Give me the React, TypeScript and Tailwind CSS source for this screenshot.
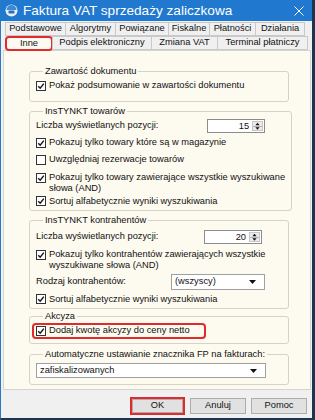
import { ReactNode } from 'react';

function Check({ checked = true }: { checked?: boolean }) {
  return (
    <span className="flex h-[10px] w-[10px] shrink-0 items-center justify-center border border-[#333] bg-white">
      {checked && (
        <svg width="8" height="8" viewBox="0 0 8 8">
          <path d="M1.2 4.2 L3.2 6.2 L6.8 1.6" stroke="#1a1a1a" strokeWidth="1.5" fill="none" />
        </svg>
      )}
    </span>
  );
}

function Spin({ value }: { value: string }) {
  return (
    <div className="flex h-[14px] w-[58px] border border-[#8c8c8c] bg-white">
      <span className="flex-1 pr-[3px] text-right leading-[12px]">{value}</span>
      <span className="my-[1px] mr-[1px] flex w-[11px] flex-col border border-[#c8c8c8] bg-[#eaeaea]">
        <svg className="flex-1" viewBox="0 0 9 5" width="9" height="5">
          <path d="M1.5 4.5 L4.5 1 L7.5 4.5 Z" fill="#111" />
        </svg>
        <span className="h-px bg-[#b5b5b5]" />
        <svg className="flex-1" viewBox="0 0 9 5" width="9" height="5">
          <path d="M1.5 0.5 L4.5 4 L7.5 0.5 Z" fill="#111" />
        </svg>
      </span>
    </div>
  );
}

function Select({ value, className }: { value: string; className: string }) {
  return (
    <div className={`flex items-center border border-[#a0a0a0] bg-white pl-[3px] pr-[8px] ${className}`}>
      <span className="flex-1">{value}</span>
      <svg width="7" height="4" viewBox="0 0 7 4">
        <path d="M0 0 L7 0 L3.5 4 Z" fill="#111" />
      </svg>
    </div>
  );
}

function Group({ title, className = '', children }: { title: string; className?: string; children: ReactNode }) {
  return (
    <fieldset className={`ml-[25px] w-[260px] rounded-[3px] border border-[#d6d2c6] px-[6px] ${className}`}>
      <legend className="ml-[7px] px-[2px] leading-[11px]">{title}</legend>
      {children}
    </fieldset>
  );
}

function Row({ label, className = '' }: { label: ReactNode; className?: string }) {
  return (
    <div className={`flex items-center gap-[3px] ${className}`}>
      <Check />
      <span className="whitespace-nowrap leading-[11px]">{label}</span>
    </div>
  );
}

const tabsTop = [
  ['Podstawowe', 'w-[61px]'],
  ['Algorytmy', 'w-[51px]'],
  ['Powiązane', 'w-[54px]'],
  ['Fiskalne', 'w-[42px]'],
  ['Płatności', 'w-[47px]'],
  ['Działania', 'w-[50px]'],
];

const tabsBottom = [
  ['Podpis elektroniczny', 'w-[100px]'],
  ['Zmiana VAT', 'w-[67px]'],
  ['Terminal płatniczy', 'w-[91px]'],
];

export default function App() {
  return (
    <div
      className="flex h-[420px] w-[315px] flex-col border-b-2 border-l border-r-[3px] border-b-[#1d3550] border-l-[#2a78c8] border-r-[#1d3550] bg-[#f0f0f0] text-[9.3px] text-[#111]"
      style={{ fontFamily: '"Liberation Sans", Arial, sans-serif' }}
    >
      {/* title bar */}
      <div className="flex h-[21px] shrink-0 items-center bg-[#2179cf] pl-[4px] pr-[8px] text-white">
        <svg width="13" height="13" viewBox="0 0 13 13">
          <circle cx="6.5" cy="6.5" r="6" fill="#e9f2fb" />
          <path d="M1.5 6 A5 5 0 0 1 11.5 6 Z" fill="#3a8ad6" />
          <rect x="3.5" y="6.5" width="6" height="3" rx="0.5" fill="#2b6fb8" />
        </svg>
        <span className="ml-[5px] flex-1 text-[13.6px] leading-[16px]">Faktura VAT sprzedaży zaliczkowa</span>
        <svg width="10" height="10" viewBox="0 0 10 10">
          <path d="M0.5 0.5 L9.5 9.5 M9.5 0.5 L0.5 9.5" stroke="#fff" strokeWidth="1" />
        </svg>
      </div>

      {/* tabs */}
      <div className="mt-[1px] flex h-[14px] pl-[4px]">
        {tabsTop.map(([t, w]) => (
          <div key={t} className={`${w} -mr-px flex items-center justify-center whitespace-nowrap border border-[#c9c9c9] bg-[#f0f0f0]`}>
            {t}
          </div>
        ))}
      </div>
      <div className="relative z-10 -mb-px flex h-[15px] pl-[4px]">
        <div className="flex w-[48px] items-center justify-center rounded-[4px] border-2 border-[#e02a2e] bg-[#fdfaf2]">
          Inne
        </div>
        {tabsBottom.map(([t, w]) => (
          <div key={t} className={`${w} -ml-px flex h-[14px] items-center justify-center whitespace-nowrap border border-[#c9c9c9] bg-[#f0f0f0]`}>
            {t}
          </div>
        ))}
      </div>

      {/* content panel */}
      <div className="ml-[2px] mr-[1px] flex h-[340px] flex-col border border-[#d4d4d4] bg-[#fdfaf0] pt-[15px]">
        <Group title="Zawartość dokumentu" className="pb-[9px]">
          <Row className="mt-[2px] h-[13px]" label="Pokaż podsumowanie w zawartości dokumentu" />
        </Group>

        <Group title="InsTYNKT towarów" className="mt-[4px] pb-[2px]">
          <div className="mt-[2px] flex h-[14px] items-center justify-between pr-[20px]">
            <span>Liczba wyświetlanych pozycji:</span>
            <Spin value="15" />
          </div>
          <Row className="mt-[1px] h-[17px]" label="Pokazuj tylko towary które są w magazynie" />
          <div className="flex h-[17px] items-center gap-[3px]">
            <Check checked={false} />
            <span>Uwzględniaj rezerwacje towarów</span>
          </div>
          <div className="mt-[4px] flex items-start gap-[3px]">
            <span className="mt-[0.5px]">
              <Check />
            </span>
            <span className="whitespace-nowrap leading-[11px]">
              Pokazuj tylko towary zawierające wszystkie wyszukiwane
              <br />
              słowa (AND)
            </span>
          </div>
          <Row className="h-[14px]" label="Sortuj alfabetycznie wyniki wyszukiwania" />
        </Group>

        <Group title="InsTYNKT kontrahentów" className="mt-[4px] pb-[2px]">
          <div className="mt-[4px] flex h-[14px] items-center justify-between pr-[20px]">
            <span>Liczba wyświetlanych pozycji:</span>
            <Spin value="20" />
          </div>
          <div className="mt-[5px] flex items-start gap-[3px]">
            <span className="mt-[0.5px]">
              <Check />
            </span>
            <span className="whitespace-nowrap leading-[11px]">
              Pokazuj tylko kontrahentów zawierających wszystkie
              <br />
              wyszukiwane słowa (AND)
            </span>
          </div>
          <div className="mt-[3px] flex h-[16px] items-center">
            <span className="flex-1">Rodzaj kontrahentów:</span>
            <Select value="(wszyscy)" className="mr-[17px] h-[16px] w-[94px]" />
          </div>
          <Row className="mt-[2px] h-[14px]" label="Sortuj alfabetycznie wyniki wyszukiwania" />
        </Group>

        <Group title="Akcyza" className="mt-[2px] pb-[4px]">
          <div className="-ml-[4px] mt-[1px] flex h-[16px] w-[174px] items-center gap-[3px] rounded-[4px] border-2 border-[#e02a2e] pl-[2px]">
            <Check />
            <span className="whitespace-nowrap">Dodaj kwotę akcyzy do ceny netto</span>
          </div>
        </Group>

        <Group title="Automatyczne ustawianie znacznika FP na fakturach:" className="mt-[5px] pb-[6px]">
          <Select value="zafiskalizowanych" className="mt-[3px] h-[15px] w-[230px]" />
        </Group>
      </div>

      {/* buttons */}
      <div className="flex flex-1 items-start justify-end gap-[5px] pr-[5px] pt-[7px]">
        <div className="flex h-[18px] w-[55px] items-center justify-center border-2 border-[#e02a2e]">
          <div className="flex h-[14px] w-[51px] items-center justify-center border border-[#adadad] bg-[#e1e1e1]">OK</div>
        </div>
        <div className="mt-[1px] flex h-[16px] w-[56px] items-center justify-center border border-[#adadad] bg-[#e1e1e1]">
          Anuluj
        </div>
        <div className="mt-[1px] flex h-[16px] w-[56px] items-center justify-center border border-[#adadad] bg-[#e1e1e1]">
          Pomoc
        </div>
      </div>
    </div>
  );
}
